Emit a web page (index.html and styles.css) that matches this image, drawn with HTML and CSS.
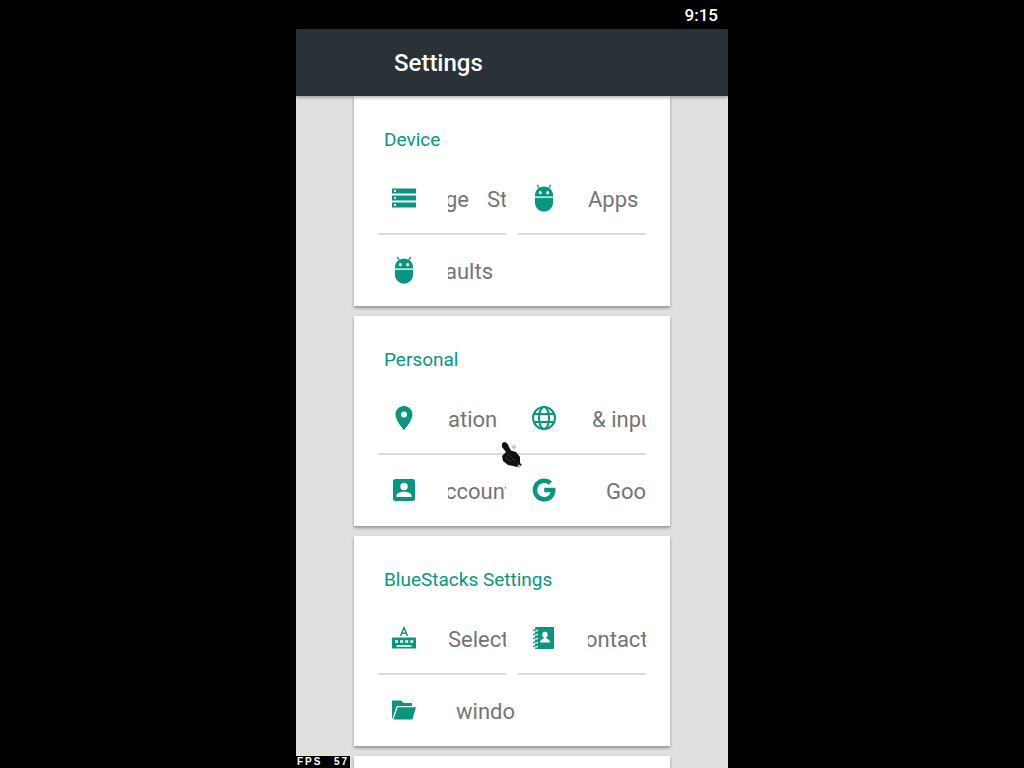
FILE: index.html
```html
<!DOCTYPE html>
<html lang="en">
<head>
<meta charset="utf-8">
<meta name="viewport" content="width=device-width, initial-scale=1">
<title>Settings</title>
<link rel="stylesheet" href="styles.css">
</head>
<body>
<svg class="sprite" aria-hidden="true">
  <symbol id="android" viewBox="3 0 18 24">
    <path d="M4.200 10.800V9.700A7.800 7.600 0 0 1 19.800 9.700V10.800Z"/>
    <path d="M4.200 11.800H19.800V16A7.800 7.800 0 0 1 4.200 16Z"/>
    <path d="M8.200 4 6.200.8M15.800 4 17.800.8" fill="none" stroke="currentColor" stroke-width="1"/>
    <circle cx="8.800" cy="7.400" r="1.300" fill="#fff"/><circle cx="15.200" cy="7.400" r="1.300" fill="#fff"/>
  </symbol>
</svg>
<div class="phone">
  <div class="status"><time>9:15</time></div>
  <header class="bar"><h1 class="title">Settings</h1></header>
  <main class="content">
    <section class="card">
      <h2 class="heading">Device</h2>
      <div class="row row-split">
        <a class="item" href="#"><svg class="icon" viewBox="0 0 24 24"><path d="M0 2.500H24V7.500H0ZM0 9.500H24V14.500H0ZM0 16.500H24V21.500H0Z"/><path fill="#fff" d="M2 4H4V6H2ZM2 11H4V13H2ZM2 18H4V20H2Z"/></svg><span class="label"><span class="text cut">ge</span><span class="text next">St</span></span></a>
        <a class="item" href="#"><svg class="icon icon-tall"><use href="#android"/></svg><span class="label"><span class="text">Apps</span></span></a>
      </div>
      <div class="row">
        <a class="item item-wide" href="#"><svg class="icon icon-tall"><use href="#android"/></svg><span class="label"><span class="text cut">aults</span></span></a>
      </div>
    </section>
    <section class="card">
      <h2 class="heading">Personal</h2>
      <div class="row row-joined">
        <a class="item" href="#"><svg class="icon" viewBox="0 0 24 24"><path fill-rule="evenodd" d="M12 0C7.200 0 3.500 3.700 3.500 8.400 3.500 14.700 12 24 12 24S20.500 14.700 20.500 8.400C20.500 3.700 16.800 0 12 0ZM12 5.500A3 3 0 1 1 12 11.500 3 3 0 0 1 12 5.500Z"/></svg><span class="label"><span class="text">ation</span></span></a>
        <a class="item" href="#"><svg class="icon" viewBox="0 0 24 24"><g fill="none" stroke="currentColor" stroke-width="2"><circle cx="12" cy="12" r="11"/><ellipse cx="12" cy="12" rx="5" ry="11"/><path d="M2 8H22M2 16H22"/></g></svg><span class="label"><span class="text entering">&amp; inpu</span></span></a>
      </div>
      <div class="row">
        <a class="item" href="#"><svg class="icon" viewBox="0 0 24 24"><rect x="1" y="1" width="22" height="22" rx="2.500"/><circle cx="12" cy="8.500" r="3.700" fill="#fff"/><path fill="#fff" d="M4.500 19V17.500C4.500 14.800 9 13.700 12 13.700S19.500 14.800 19.500 17.500V19Z"/></svg><span class="label"><span class="text cut">ccount</span></span></a>
        <a class="item" href="#"><svg class="icon" viewBox="0 0 24 24"><path d="M12.200.5A11.500 11.500 0 1 0 12.200 23.500C19 23.500 23.500 18.700 23.500 12Q23.500 10.800 23.200 9.700H12.200V14.200H18.600C17.900 17.400 15.500 19 12.200 19A7 7 0 1 1 12.200 5C14 5 15.500 5.700 16.700 6.700L20.100 3.400A11.500 11.500 0 0 0 12.200.5Z"/></svg><span class="label label-end"><span class="text">Goo</span></span></a>
      </div>
    </section>
    <section class="card">
      <h2 class="heading">BlueStacks Settings</h2>
      <div class="row row-split">
        <a class="item" href="#"><svg class="icon" viewBox="0 0 24 24"><path d="M8.500 10 12 1.800 15.500 10M9.700 7.300H14.300" fill="none" stroke="currentColor" stroke-width="1.500"/><rect y="11.500" width="24" height="11" rx="1"/><path d="M3 15.500H21.500" stroke="#fff" stroke-width="2.600" stroke-dasharray="3 2.100"/><path d="M4.500 20H19.500" stroke="#fff" stroke-width="1.600"/></svg><span class="label"><span class="text">Select</span></span></a>
        <a class="item" href="#"><svg class="icon" viewBox="0 0 24 24"><rect x="3" y="1" width="19" height="22" rx="1"/><path d="M2 4.300H5M2 8.300H5M2 12.300H5M2 16.300H5M2 20.300H5" stroke="#fff" stroke-width="2.400" stroke-linecap="round"/><path d="M1.500 4.300 5 3.300M1.500 8.300 5 7.300M1.500 12.300 5 11.300M1.500 16.300 5 15.300M1.500 20.300 5 19.300" stroke="currentColor" stroke-width="1.300" stroke-linecap="round"/><ellipse cx="13" cy="8.800" rx="2.700" ry="3" fill="#fff"/><path fill="#fff" d="M11.700 10H14.300V12.500Q18 13.500 18 16.500H8Q8 13.500 11.700 12.500Z"/></svg><span class="label"><span class="text cut">ontact</span></span></a>
      </div>
      <div class="row">
        <a class="item item-wide" href="#"><svg class="icon" viewBox="0 0 24 24"><path d="M0 21.500V2.500H9L11.500 5H20V8H4.700Z"/><path d="M5.700 9.300H24L20.300 21.500H1.500Z"/></svg><span class="label"><span class="text arriving">windo</span></span></a>
      </div>
    </section>
    <section class="card card-next"></section>
  </main>
  <div class="fps"><span>FPS</span><span>57</span></div>
</div>
<svg class="pointer" viewBox="0 0 24 28" aria-hidden="true">
  <path fill="#101114" d="M2 3C4-1 8 2 9 6L11 9.500 16 11 20 16V22L22 24 17 26 13 25 8 24 3 20 2 15 6 11 2 6Z"/>
  <path d="M5 16 11 21M8 13 15 20" stroke="#33343a" fill="none"/>
  <path d="M14 4.500 15.500 6 14 7.500 12.500 6Z" fill="#fff" stroke="#695660" stroke-width=".7"/>
  <path d="M19 23.500 20.500 25 19 26.500 17.500 25Z" fill="#fff" stroke="#695660" stroke-width=".7"/>
</svg>
</body>
</html>
```
FILE: styles.css
```css
* { box-sizing: border-box; }

body {
  margin: 0;
  background: #000;
  font-family: Roboto, "Liberation Sans", sans-serif;
}

.sprite { display: none; }

.phone {
  position: relative;
  display: flex;
  flex-direction: column;
  width: 100%;
  max-width: 432px;
  height: 100vh;
  margin: 0 auto;
  overflow: hidden;
  background: #e0e0df;
}

.status {
  display: flex;
  justify-content: flex-end;
  padding: 2px 10px 0;
  background: #000;
  color: #fff;
  font-size: 17px;
  font-weight: 500;
  line-height: 27px;
}

.bar {
  position: relative;
  z-index: 1;
  padding: 2px 98px 0;
  background: #2a3238;
  box-shadow: 0 1px 4px rgba(0, 0, 0, .4);
}

.title {
  margin: 0;
  color: #fff;
  font-size: 24px;
  font-weight: 500;
  line-height: 65px;
}

.content {
  display: flex;
  flex: 1;
  flex-direction: column;
  gap: 10px;
  min-height: 0;
  padding: 0 58px;
  overflow: hidden;
}

.card {
  flex: none;
  padding: 30px 24px 0;
  background: #fff;
  box-shadow: 0 2px 3px rgba(0, 0, 0, .35);
}

.card-next { min-height: 210px; }

.heading {
  margin: 0 6px 8px;
  color: #099680;
  font-size: 19px;
  font-weight: 400;
  line-height: 28px;
}

.row {
  display: grid;
  grid-template-columns: minmax(0, 1fr) minmax(0, 1fr);
  column-gap: 12px;
  position: relative;
}

.row-split .item::after,
.row-joined::after {
  content: "";
  position: absolute;
  right: 0;
  bottom: -1px;
  left: 0;
  height: 2px;
  background: #dddddf;
}

.item {
  position: relative;
  display: flex;
  align-items: center;
  height: 72px;
  padding-left: 14px;
  color: #757575;
  font-size: 22px;
  text-decoration: none;
}

.item-wide { grid-column: span 2; }

.icon {
  flex: none;
  width: 24px;
  height: 24px;
  margin-right: 32px;
  color: #099680;
  fill: currentColor;
}

.icon-tall { height: 28px; }

.label {
  display: flex;
  flex: 1;
  min-width: 0;
  padding-top: 3px;
  overflow: hidden;
  line-height: 30px;
  white-space: nowrap;
}

.label-end { justify-content: flex-end; }

/* Marquee positions of labels that scroll through their box */
.text { flex: none; }
.cut { margin-left: -3px; }
.entering { margin-left: 4px; }
.arriving { margin-left: 8px; }
.next { margin-left: 18px; }

.fps {
  position: absolute;
  z-index: 2;
  bottom: 0;
  left: 0;
  display: flex;
  justify-content: space-between;
  width: 54px;
  padding: 0 1px;
  background: #000;
  color: #fff;
  font: bold 10px/12px "Liberation Sans", sans-serif;
  letter-spacing: 2px;
}

.pointer {
  position: absolute;
  z-index: 3;
  top: 441px;
  left: calc(50% - 12px);
  width: 24px;
  height: 28px;
}
```
